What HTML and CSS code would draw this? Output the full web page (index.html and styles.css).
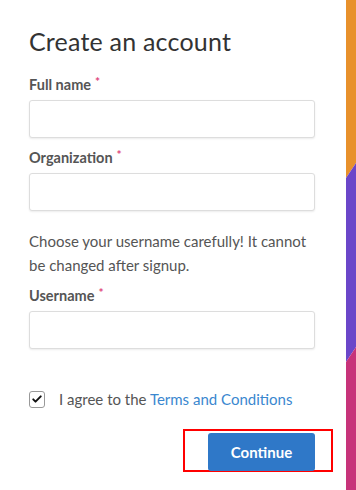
FILE: index.html
```html
<!DOCTYPE html>
<html lang="en">
<head>
  <meta charset="UTF-8" />
  <meta name="viewport" content="width=device-width, initial-scale=1.0" />
  <title>Create an account</title>
  <link rel="stylesheet" href="styles.css">
</head>
<body>
  <div class="page">
    <form class="signup">
      <h2>Create an account</h2>

      <label class="field-label">Full name<span class="req">*</span></label>
      <input class="field" type="text">

      <label class="field-label">Organization<span class="req">*</span></label>
      <input class="field" type="text">

      <p class="hint">Choose your username carefully! It cannot be changed after signup.</p>

      <label class="field-label">Username<span class="req">*</span></label>
      <input class="field" type="text">

      <label class="agree">
        <span class="check">
          <svg viewBox="0 0 16 16" width="12" height="12">
            <path d="M3 8.5l3 3 7-7" fill="none" stroke="#111" stroke-width="2.6" stroke-linecap="round" stroke-linejoin="round" />
          </svg>
        </span>
        <span>I agree to the <a href="#">Terms and Conditions</a></span>
      </label>

      <div class="actions">
        <div class="highlight">
          <button type="button">Continue</button>
        </div>
      </div>
    </form>

    <div class="stripe">
      <svg viewBox="0 0 10 490" preserveAspectRatio="none">
        <polygon points="0,0 10,0 10,163 0,178" fill="#e8912c" />
        <polygon points="0,178 10,163 10,347 0,362" fill="#6b46c9" />
        <polygon points="0,362 10,347 10,490 0,490" fill="#c7337a" />
      </svg>
    </div>
  </div>
</body>
</html>
```

FILE: styles.css
```css
* { box-sizing: border-box; margin: 0; padding: 0; }
body {
  font-family: Lato, 'Open Sans', sans-serif;
  background: #fff;
  color: #555;
}
.page { display: flex; height: 490px; }
.signup {
  width: 346px;
  padding: 26px 31px 0 29px;
  display: flex; flex-direction: column;
}
h2 {
  font-size: 25px; font-weight: 400; color: #333;
  letter-spacing: 0.2px; line-height: 30px;
  margin-bottom: 20px;
}
.field-label {
  font-size: 14.5px; font-weight: 700; color: #555;
  line-height: 18px; margin-bottom: 6px;
}
.req { color: #e0457b; font-size: 12px; vertical-align: top; margin-left: 4px; position: relative; top: -3px; }
.field {
  height: 38px; width: 100%;
  border: 1px solid #ddd; border-radius: 3px;
  box-shadow: 0 1px 2px rgba(0, 0, 0, 0.08);
  margin-bottom: 11px;
}
.hint {
  font-size: 15px; line-height: 24px; color: #555;
  margin: 7px 0 10px;
}
.agree {
  display: flex; align-items: center; gap: 14px;
  margin-top: 30px;
  font-size: 15px; line-height: 18px; color: #555;
}
.check {
  width: 16px; height: 17px;
  border: 1px solid #999; border-radius: 3px;
  display: flex; align-items: center; justify-content: center;
}
.agree a { color: #3a87cf; text-decoration: none; }
.actions { display: flex; justify-content: flex-end; margin-top: 21px; margin-right: -18px; }
.highlight {
  border: 2px solid #f00;
  padding: 2px 16px 0 23px;
  width: 150px; height: 43px;
}
button {
  background: #2f78c8; color: #fff; border: none;
  width: 107px; height: 38px; border-radius: 3px;
  font-family: inherit; font-size: 15px; font-weight: 700;
}
.stripe { width: 10px; height: 490px; }
.stripe svg { display: block; width: 10px; height: 490px; }
```
